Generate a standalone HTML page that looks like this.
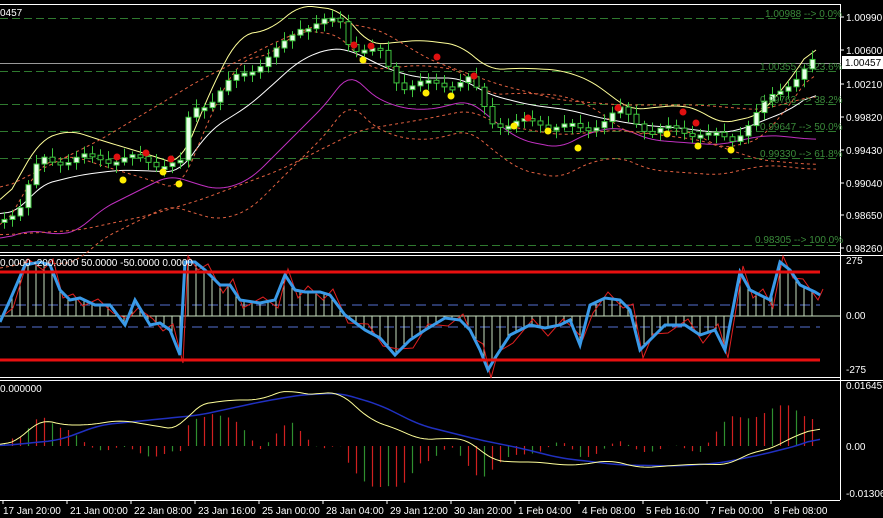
<!DOCTYPE html>
<html><head><meta charset="utf-8"><style>
html,body{margin:0;padding:0;background:#000;width:883px;height:518px;overflow:hidden}
svg{display:block}
text{font-family:"Liberation Sans",sans-serif;font-size:10px;fill:#fff}
</style></head><body>
<svg id="s" width="883" height="518" viewBox="0 0 883 518" xmlns="http://www.w3.org/2000/svg">
<rect width="883" height="518" fill="#000"/>
<line x1="0" y1="4.5" x2="840" y2="4.5" stroke="#fff"/>
<line x1="840.5" y1="4" x2="840.5" y2="500" stroke="#fff"/>
<line x1="0" y1="252.5" x2="840" y2="252.5" stroke="#fff"/>
<line x1="0" y1="255.5" x2="883" y2="255.5" stroke="#fff"/>
<line x1="0" y1="377.5" x2="840" y2="377.5" stroke="#fff"/>
<line x1="0" y1="380.5" x2="883" y2="380.5" stroke="#fff"/>
<line x1="0" y1="500.5" x2="840" y2="500.5" stroke="#fff"/>
<g stroke="#2f7a2f" stroke-dasharray="8,4" stroke-width="1">
<line x1="0" y1="18.5" x2="840" y2="18.5"/>
<line x1="0" y1="71.5" x2="840" y2="71.5"/>
<line x1="0" y1="104.5" x2="840" y2="104.5"/>
<line x1="0" y1="131.5" x2="840" y2="131.5"/>
<line x1="0" y1="158.5" x2="840" y2="158.5"/>
<line x1="0" y1="245.5" x2="840" y2="245.5"/>
</g>
<line x1="0" y1="63.5" x2="840" y2="63.5" stroke="#999"/>
<g id="main"></g>
<g>
<text x="765" y="17" style="fill:#3a8a3a">1.00988 --&gt; 0.0%</text>
<text x="760" y="70" style="fill:#3a8a3a">1.00355 --&gt; 23.6%</text>
<text x="760" y="103" style="fill:#3a8a3a">0.99763 --&gt; 38.2%</text>
<text x="760" y="130" style="fill:#3a8a3a">0.99647 --&gt; 50.0%</text>
<text x="760" y="157" style="fill:#3a8a3a">0.99330 --&gt; 61.8%</text>
<text x="755" y="243" style="fill:#3a8a3a">0.98305 --&gt; 100.0%</text>
</g>
<text x="0" y="16">0457</text>
<g>
<text x="846" y="21">1.00990</text>
<text x="846" y="54">1.00600</text>
<text x="846" y="88">1.00210</text>
<text x="846" y="121">0.99820</text>
<text x="846" y="154">0.99430</text>
<text x="846" y="187">0.99040</text>
<text x="846" y="219">0.98650</text>
<text x="846" y="252">0.98260</text>
<rect x="842" y="56" width="41" height="13" fill="#fff"/>
<text x="845" y="66" style="fill:#000">1.00457</text>
<text x="846" y="264">275</text>
<text x="846" y="319">0.00</text>
<text x="846" y="373">-275</text>
<text x="846" y="389">0.016457</text>
<text x="846" y="450">0.00</text>
<text x="846" y="497">-0.013062</text>
</g>
<g stroke="#fff"><line x1="840" y1="17" x2="844" y2="17"/><line x1="840" y1="50" x2="844" y2="50"/><line x1="840" y1="84" x2="844" y2="84"/><line x1="840" y1="117" x2="844" y2="117"/><line x1="840" y1="150" x2="844" y2="150"/><line x1="840" y1="183" x2="844" y2="183"/><line x1="840" y1="215" x2="844" y2="215"/><line x1="840" y1="248" x2="844" y2="248"/></g>
<g stroke="#5570d0" stroke-dasharray="10,6"><line x1="0" y1="305" x2="820" y2="305"/><line x1="0" y1="327" x2="820" y2="327"/></g>
<g id="cci"></g>
<line x1="0" y1="272" x2="820" y2="272" stroke="#e81010" stroke-width="3"/>
<line x1="0" y1="360" x2="820" y2="360" stroke="#e81010" stroke-width="3"/>
<text x="0" y="266">0.0000 -200.0000 50.0000 -50.0000 0.0000</text>
<text x="0" y="392">0.000000</text>
<g id="macd"></g>
<g id="time"></g>
</svg>
<script>
(function(){
var NS="http://www.w3.org/2000/svg";
function el(p,t,a){var e=document.createElementNS(NS,t);for(var k in a)e.setAttribute(k,a[k]);p.appendChild(e);return e;}
function interp(pts,x){for(var i=0;i<pts.length-1;i++){if(x>=pts[i][0]&&x<=pts[i+1][0]){var t=(x-pts[i][0])/(pts[i+1][0]-pts[i][0]);return pts[i][1]+t*(pts[i+1][1]-pts[i][1]);}}return pts[pts.length-1][1];}
function pl(g,pts,st,w,da){var d=pts.map(function(p){return p.join(',')}).join(' ');var a={points:d,fill:'none',stroke:st,'stroke-width':w};if(da)a['stroke-dasharray']=da;el(g,'polyline',a);}
function smooth(key,step){var raw=[];for(var x=key[0][0];x<=key[key.length-1][0];x+=step)raw.push([x,interp(key,x)]);
 var o=[];for(var i=0;i<raw.length;i++){var s=0,n=0;for(var j=-3;j<=3;j++){if(raw[i+j]){s+=raw[i+j][1];n++;}}o.push([raw[i][0],s/n]);}return o;}
var M=document.getElementById('main');
var price=[[0,220],[20,205],[40,160],[60,160],[100,158],[140,160],[180,165],[190,110],[210,100],[240,75],[280,50],[300,25],[340,22],[350,45],[380,55],[400,85],[430,85],[470,80],[490,120],[510,125],[540,122],[580,130],[620,112],[650,130],[700,132],[730,142],[750,120],[790,80],[815,62]];
var up=[[0,210],[40,140],[70,130],[100,140],[150,155],[180,165],[215,80],[240,35],[270,30],[300,5],[340,10],[370,45],[420,40],[460,45],[490,70],[520,68],[560,70],[590,80],[630,110],[650,108],[680,105],[700,110],[720,124],[760,115],[790,80],[818,38]];
var mid=[[0,215],[20,210],[40,185],[80,175],[120,170],[180,172],[210,130],[250,105],[300,60],[330,48],[350,50],[390,70],[420,78],[460,78],[490,95],[530,105],[570,110],[600,118],[640,125],[680,128],[720,133],[740,130],[790,110],[818,90]];
var low=[[0,240],[30,230],[60,235],[80,230],[100,210],[130,195],[170,175],[200,185],[220,190],[250,180],[290,140],[330,100],[350,70],[370,95],[400,108],[430,110],[470,100],[490,118],[520,140],[560,148],[590,132],[620,127],[650,140],[690,143],[720,145],[750,138],[770,135],[818,140]];
pl(M,smooth(low,4),'#c030c0',1);
pl(M,smooth(up,4),'#ffff99',1);
pl(M,smooth(mid,4),'#ffffff',1);
pl(M,smooth(up.map(function(p){return [p[0],p[1]+25]}),4),'#e06040',1,'3,3');
pl(M,smooth(low.map(function(p){return [p[0],p[1]+30]}),4),'#e06040',1,'3,3');
pl(M,smooth([[0,190],[100,140],[200,80],[280,40],[330,20],[380,30],[430,60],[500,85],[560,100],[620,105],[700,105],[760,110],[818,95]],4),'#e06040',1,'3,3');
pl(M,smooth([[0,235],[80,230],[150,215],[200,200],[280,170],[360,130],[420,120],[470,110],[500,125],[560,135],[620,130],[700,140],[760,160],[818,165]],4),'#e06040',1,'3,3');
var prev=interp(price,0);
for(var x=4;x<820;x+=8){var c=interp(price,x)+Math.sin(x*1.7)*5;var o=prev;var tp=Math.min(o,c),bt=Math.max(o,c);if(bt-tp<2){bt=tp+3;}
el(M,'line',{x1:x+0.5,y1:tp-3-Math.abs(Math.sin(x))*6,x2:x+0.5,y2:bt+3+Math.abs(Math.cos(x))*5,stroke:'#3ec43e'});
el(M,'rect',{x:x-2,y:tp,width:5,height:bt-tp,fill:(c<o?'#e8ffe8':'#000'),stroke:'#3ec43e'});prev=c;}
[[117,157],[146,153],[171,159],[354,45],[371,46],[437,57],[474,76],[528,118],[618,108],[683,112],[696,123]].forEach(function(p){el(M,'circle',{cx:p[0],cy:p[1],r:3.5,fill:'#e01010'});});
[[123,180],[163,172],[179,184],[363,60],[426,93],[451,96],[514,126],[548,131],[578,148],[667,134],[698,146],[731,150]].forEach(function(p){el(M,'circle',{cx:p[0],cy:p[1],r:3.5,fill:'#ffee00'});});
var C=document.getElementById('cci');
var cci=[[0,322],[10,300],[25,265],[40,262],[50,265],[60,290],[70,300],[80,298],[95,305],[110,305],[125,325],[135,300],[150,325],[160,323],[170,330],[180,355],[185,262],[195,262],[205,270],[220,285],[230,285],[240,300],[260,303],[275,300],[285,275],[295,290],[305,292],[320,292],[330,295],[345,315],[365,330],[380,338],[395,355],[410,340],[425,330],[445,318],[460,320],[470,330],[480,350],[488,370],[495,358],[510,335],[530,325],[545,328],[560,325],[570,320],[580,345],[590,305],[605,298],[620,300],[630,310],[640,350],[650,340],[665,325],[685,325],[700,335],[715,330],[725,350],[740,272],[750,290],[760,295],[770,300],[780,262],[790,270],[800,285],[815,292],[820,295]];
for(var x=4;x<820;x+=8){var v=interp(cci,x);el(C,'line',{x1:x,y1:316,x2:x,y2:v,stroke:'#c8e0c0','stroke-width':1});}
for(var x=0;x<820;x+=24){el(C,'line',{x1:x,y1:316,x2:x+24,y2:316,stroke:'#c8e0c0'});}
pl(C,cci.map(function(p,i){return [p[0]+3,p[1]+(i%2?8:-6)]}),'#e02020',1);
pl(C,cci,'#3a9ae8',3);
var G=document.getElementById('macd');
var sig=[[0,446],[60,440],[100,425],[150,420],[200,415],[260,402],[300,395],[340,393],[380,405],[420,425],[480,440],[520,448],[560,458],[620,465],[680,466],[720,463],[760,455],[800,445],[820,437]];
var mac=[[0,446],[20,440],[40,418],[60,425],[90,425],[120,420],[150,425],[180,430],[195,405],[230,400],[260,400],[290,388],[300,395],[340,392],[370,420],[400,430],[420,440],[450,438],[470,440],[490,460],[510,462],[540,462],[560,465],[580,465],[610,460],[640,468],[680,465],[700,464],[730,465],[750,452],[770,450],[790,438],[820,427]];
var hist=[[0,446],[20,440],[40,410],[60,430],[80,440],[110,450],[140,452],[180,455],[190,420],[210,410],[240,428],[260,445],[290,425],[320,445],[340,450],[350,470],[370,482],[400,492],[420,460],[450,450],[480,475],[500,465],[530,450],[560,445],[580,455],[620,445],[660,450],[700,448],[730,420],[760,412],[790,408],[820,418]];
for(var x=4;x<820;x+=8){var v=interp(hist,x)+Math.sin(x*0.9)*4;var col=(Math.floor(x/8)%3==0)?'#2f8f2f':'#d02020';el(G,'line',{x1:x+0.5,y1:446,x2:x+0.5,y2:v,stroke:col,'stroke-width':1.2});}
pl(G,smooth(sig,4),'#2030c0',1.5);
pl(G,smooth(mac,4),'#ffff99',1);
var T=document.getElementById('time');
var labs=["17 Jan 20:00","21 Jan 00:00","22 Jan 08:00","23 Jan 16:00","25 Jan 00:00","28 Jan 04:00","29 Jan 12:00","30 Jan 20:00","1 Feb 04:00","4 Feb 08:00","5 Feb 16:00","7 Feb 00:00","8 Feb 08:00"];
labs.forEach(function(l,i){var x=3+i*64;el(T,'line',{x1:x,y1:500,x2:x,y2:504,stroke:'#fff'});var t=el(T,'text',{x:x+(i==0?0:3),y:514});t.textContent=l;});
})();
</script>
</body></html>
